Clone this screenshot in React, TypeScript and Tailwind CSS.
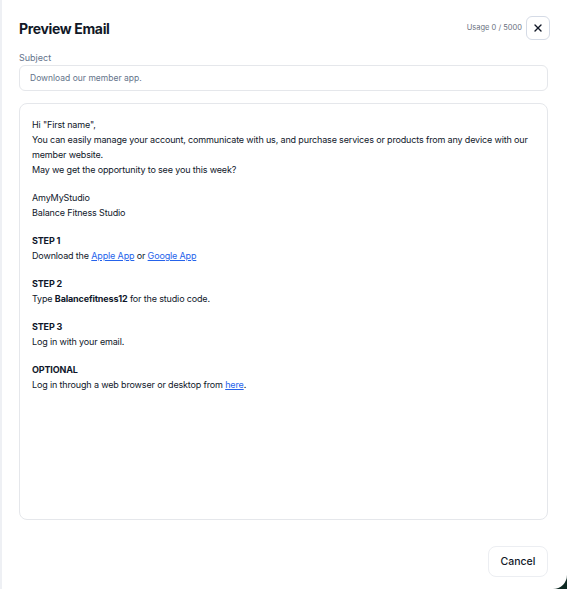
import { X } from "lucide-react";

export default function App() {
  return (
    <div className="w-[567px] h-[589px] bg-[#0f2a24] overflow-hidden" style={{ fontFamily: "Inter, 'Noto Sans', sans-serif" }}>
      <div className="flex flex-col h-full w-full bg-white rounded-br-[14px] border-l-2 border-[#eef0f4] pl-[17px] pr-[17px]">
        {/* header */}
        <div className="flex items-center justify-between pt-4 h-[40px]">
          <h2 className="text-[14px] font-bold tracking-tight text-[#111827] leading-none mt-[2px]">Preview Email</h2>
          <div className="flex items-center gap-1">
            <span className="text-[7.5px] text-[#6b7280]">Usage 0 / 5000</span>
            <button className="w-6 h-6 flex items-center justify-center rounded-md border border-[#d5dbe6] text-[#111827]">
              <X className="w-3 h-3" strokeWidth={2.75} />
            </button>
          </div>
        </div>

        <div className="flex flex-col flex-1 mr-[2px]">
          {/* subject */}
          <label className="mt-[12px] text-[9px] leading-[12px] text-[#64748b]">Subject</label>
          <div className="mt-[1px] h-[26px] flex items-center px-[10px] rounded-md border border-[#e5e7eb] text-[8.5px] text-[#64748b]">
            Download our member app.
          </div>

          {/* body */}
          <div className="mt-3 h-[417px] rounded-lg border border-[#e5e7eb] px-[12px] pt-[13px] text-[9px] tracking-[-0.15px] leading-[15px] text-[#0f172a] space-y-[13px]">
            <p>
              Hi "First name",
              <br />
              You can easily manage your account, communicate with us, and purchase services or products from any device with our member website.
              <br />
              May we get the opportunity to see you this week?
            </p>
            <p>
              AmyMyStudio
              <br />
              Balance Fitness Studio
            </p>
            <p>
              <span className="font-bold">STEP 1</span>
              <br />
              Download the <a className="text-[#2563eb] underline">Apple App</a> or <a className="text-[#2563eb] underline">Google App</a>
            </p>
            <p>
              <span className="font-bold">STEP 2</span>
              <br />
              Type <span className="font-bold">Balancefitness12</span> for the studio code.
            </p>
            <p>
              <span className="font-bold">STEP 3</span>
              <br />
              Log in with your email.
            </p>
            <p>
              <span className="font-bold">OPTIONAL</span>
              <br />
              Log in through a web browser or desktop from <a className="text-[#2563eb] underline">here</a>.
            </p>
          </div>

          {/* footer */}
          <div className="flex justify-end mt-[26px]">
            <button className="h-[31px] w-[60px] rounded-lg border border-[#eceef2] text-[10.5px] font-medium text-[#111827]">
              Cancel
            </button>
          </div>
        </div>
      </div>
    </div>
  );
}
